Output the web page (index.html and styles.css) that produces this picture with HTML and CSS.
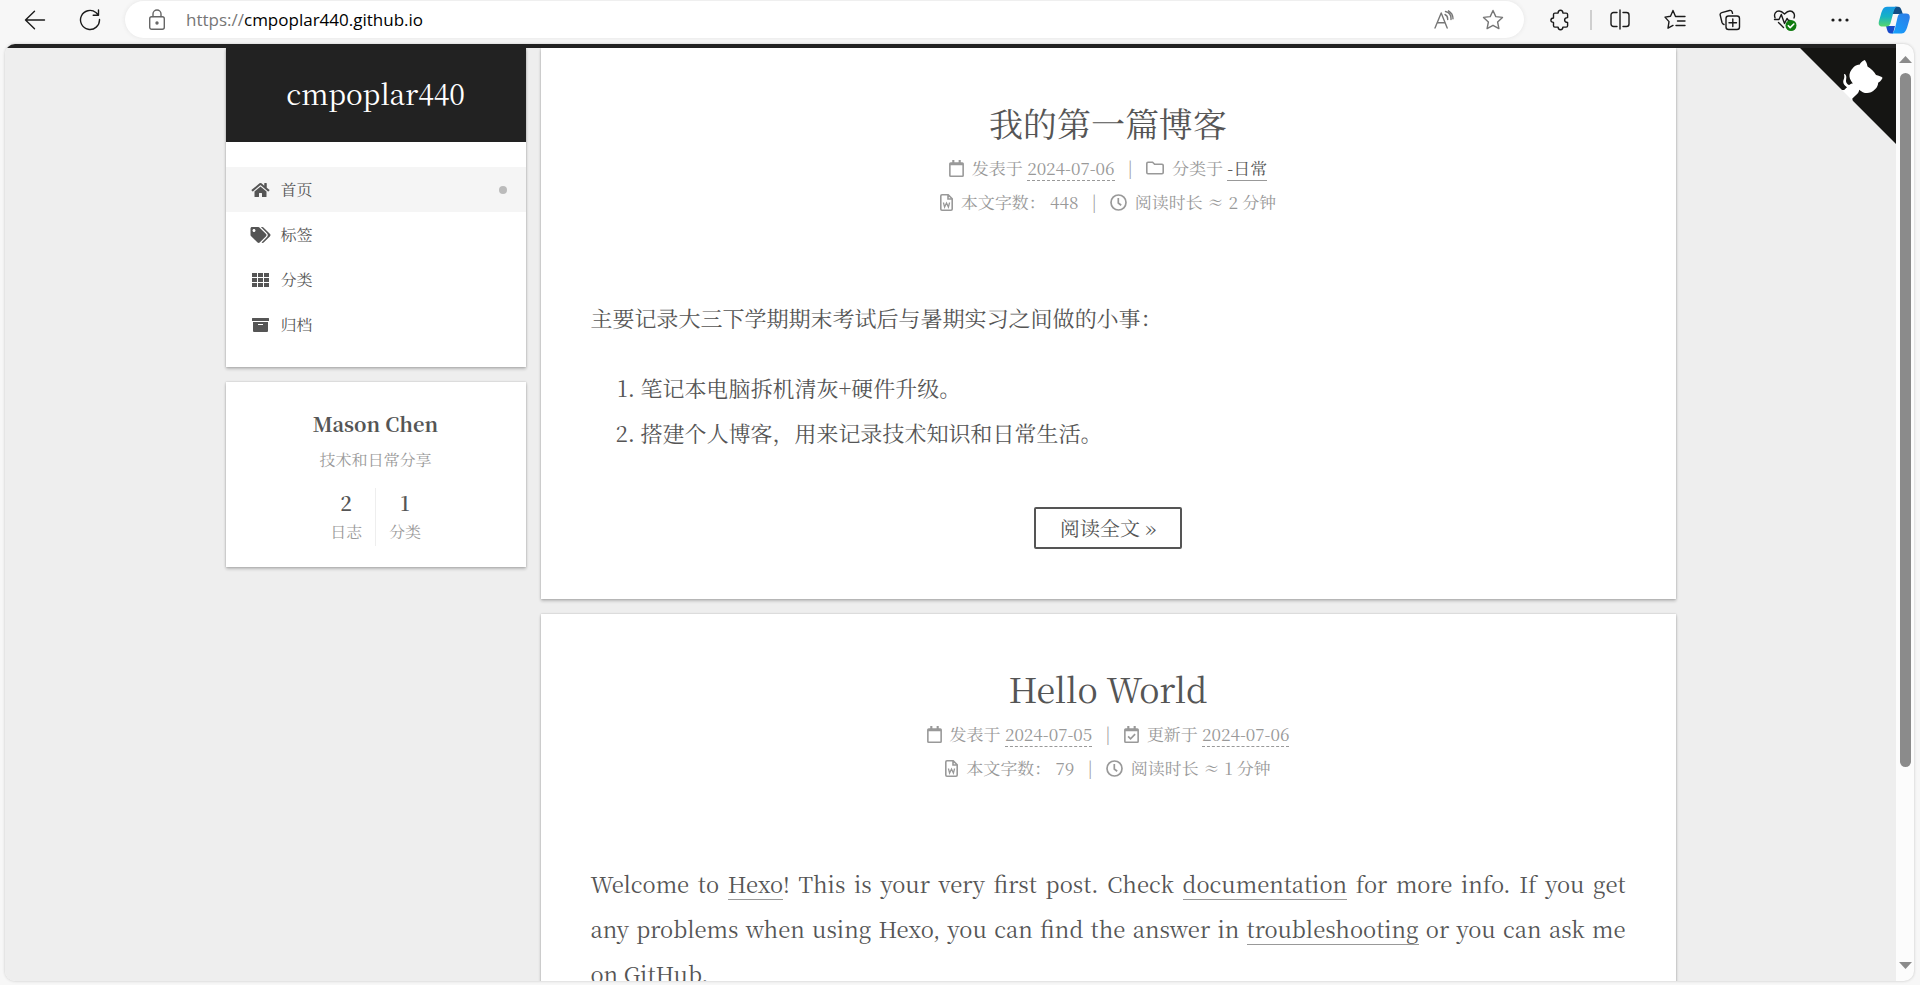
FILE: index.html
```html
<!DOCTYPE html>
<html lang="zh-CN">
<head>
<meta charset="utf-8">
<title>cmpoplar440</title>
<link rel="stylesheet" href="styles.css">
</head>
<body>
<svg class="sprite" aria-hidden="true">
  <symbol id="i-calendar" viewBox="0 0 14 16"><path fill-rule="evenodd" d="M3 0h2v2h4V0h2v2h1.500a1.500 1.500 0 0 1 1.500 1.500v11a1.500 1.500 0 0 1-1.500 1.500h-11A1.500 1.500 0 0 1 0 14.500v-11A1.500 1.500 0 0 1 1.500 2H3zM1.500 5v9.300c0 .1.100.2.200.2h10.600c.1 0 .2-.1.200-.2V5z"/></symbol>
  <symbol id="i-check" viewBox="0 0 14 16"><use href="#i-calendar"/><path d="M3.800 9.700l2.300 2.300 4.300-4.400" fill="none" stroke="currentColor" stroke-width="1.600"/></symbol>
  <symbol id="i-folder" viewBox="0 0 18 16"><path d="M.8 3.500c0-.7.500-1.200 1.200-1.200h4.600l2 2H16c.7 0 1.200.5 1.200 1.200v7c0 .7-.5 1.200-1.200 1.200H2c-.7 0-1.200-.5-1.200-1.200z" fill="none" stroke="currentColor" stroke-width="1.600"/></symbol>
  <symbol id="i-word" viewBox="0 0 13 17"><path d="M.8 2c0-.7.500-1.200 1.200-1.200h6.200l4 4V15c0 .7-.5 1.200-1.200 1.200H2c-.7 0-1.200-.5-1.200-1.200zM8 .8V5h4.200" fill="none" stroke="currentColor" stroke-width="1.600"/><path d="M3.400 8.500l1.200 4.500 1.900-4 1.900 4 1.200-4.500" fill="none" stroke="currentColor" stroke-width="1.300"/></symbol>
  <symbol id="i-clock" viewBox="0 0 17 17"><circle cx="8.500" cy="8.500" r="7.500" fill="none" stroke="currentColor" stroke-width="1.700"/><path d="M8.300 4v5l2.900 2.200" fill="none" stroke="currentColor" stroke-width="1.700"/></symbol>
</svg>

<header class="toolbar">
  <button class="tool" aria-label="后退"><svg width="22" height="20" viewBox="0 0 22 20" class="line"><path d="M20.500 10H1.500M10.500 1.200L1.500 10l9 8.800"/></svg></button>
  <button class="tool" aria-label="刷新"><svg width="22" height="22" viewBox="0 0 22 22" class="line"><path d="M20.500 10.500a9.500 9.500 0 1 1-3.600-7l2.600 2.500M19.500 1v5.200h-5.300"/></svg></button>
  <div class="address">
    <svg class="line lock" width="18" height="22" viewBox="0 0 18 22"><rect x="1.700" y="7.700" width="14.600" height="12.600" rx="2"/><path d="M5 7.500V5a4 4 0 0 1 8 0v2.500"/><circle cx="9" cy="14" r="1" fill="currentColor"/></svg>
    <span class="url"><span class="scheme">https://</span>cmpoplar440.github.io</span>
    <button class="tool small" aria-label="大声朗读"><svg class="line" width="20" height="20" viewBox="0 0 20 20"><path d="M1 18L7.200 3l6 15M3.200 12.800h8M11 4.500c2 1 2.800 2.700 2.700 5M11.500 1.500c4 1 5.800 4 5.500 8M14.500.8c2.500 1.500 4.500 4 4.500 8"/></svg></button>
    <button class="tool small" aria-label="收藏此页"><svg class="line" width="22" height="22" viewBox="0 0 22 22"><path d="M11 1.500l2.800 6.100 6.700.8-4.900 4.600 1.300 6.600L11 16.300l-5.900 3.300L6.400 13 1.500 8.400l6.700-.8z"/></svg></button>
  </div>
  <button class="tool" aria-label="扩展"><svg class="line" width="20" height="22" viewBox="0 0 20 22"><path d="M3.500 9V5.500c0-.9.500-1.400 1.400-1.400h3.200C8.100 2.200 9.200 1.200 10.500 1.200s2.400 1 2.400 2.900h3.300c.9 0 1.400.5 1.400 1.400V8.600c-1.900 0-3 1-3 2.400s1.100 2.400 3 2.400v3.300c0 .9-.5 1.400-1.400 1.400h-3.300c0 1.800-1.100 2.700-2.400 2.700s-2.400-.9-2.400-2.700H4.900c-.9 0-1.400-.5-1.400-1.400v-3.300C1.800 13.400.9 12.400.9 11.200S1.800 9 3.500 9z"/></svg></button>
  <span class="divider"></span>
  <button class="tool" aria-label="分屏"><svg class="line" width="20" height="22" viewBox="0 0 20 22"><path d="M7 3.500H3.500A2.500 2.500 0 0 0 1 6v9a2.500 2.500 0 0 0 2.500 2.500H7M13 3.500h3.500A2.500 2.500 0 0 1 19 6v9a2.500 2.500 0 0 1-2.500 2.500H13M10 1v19"/></svg></button>
  <button class="tool" aria-label="收藏夹"><svg class="line" width="22" height="22" viewBox="0 0 22 22"><path d="M13.500 7.500h-2L9 1.500 6.500 7.300l-5.500.8 4 4.500-1 6.600 5-2.800M12 7.500h9M13.500 12H21M12 16.500h9"/></svg></button>
  <button class="tool" aria-label="集锦"><svg class="line" width="22" height="22" viewBox="0 0 22 22"><rect x="7" y="7" width="13.500" height="13.500" rx="2.500"/><path d="M13.800 10v7.500M10 13.700h7.500M5 15.500c-1-.3-1.700-1-2-2L1.200 6.200c-.3-1.300.4-2.300 1.600-2.600L10.500 1.500c1.300-.3 2.300.3 2.700 1.500l.3 1.300"/></svg></button>
  <button class="tool" aria-label="浏览器概要"><svg class="line" width="24" height="24" viewBox="0 0 24 24"><path d="M2 9.800C.5 5.500 3 3 6 3c2 0 3.500 1 5.500 3C13.500 4 15 3 17 3c3 0 5.500 3 4 7M1.500 11.500H6l2.300-5 3.200 9 2.500-5 1.500 2H17M5.500 14.500l5 5"/><circle cx="18" cy="17.500" r="5.500" fill="#107c10" stroke="none"/><path d="M15.300 17.700l1.900 1.900 3.600-3.600" stroke="#fff" stroke-width="1.600"/></svg></button>
  <button class="tool" aria-label="更多"><svg width="18" height="4" viewBox="0 0 18 4"><circle cx="2" cy="2" r="1.600"/><circle cx="9" cy="2" r="1.600"/><circle cx="16" cy="2" r="1.600"/></svg></button>
  <button class="tool copilot" aria-label="Copilot"><svg width="32" height="28" viewBox="0 0 32 28">
    <defs>
      <linearGradient id="ga" x1="0" y1="0" x2="0" y2="1"><stop offset="0" stop-color="#1598e6"/><stop offset=".5" stop-color="#16b3c4"/><stop offset="1" stop-color="#57d66c"/></linearGradient>
      <linearGradient id="gb" x1="0" y1="1" x2="1" y2="0"><stop offset="0" stop-color="#12a5ff"/><stop offset="1" stop-color="#2f7be6"/></linearGradient>
    </defs>
    <path d="M20 .8c2 0 3 1.500 3.800 4.200l1 3H14l3-7.200z" fill="#104d85"/>
    <path d="M8 20h9l-2 7.500h-2c-2.500 0-3.300-1.500-4-4z" fill="#1749c9"/>
    <path d="M20 .8H9C5.500.8 4.200 4 3 8L1 15c-1 4 .5 5.500 3.500 5.500h4c2.500 0 3.500-1.500 4.200-4L15.500 6C16.500 2.500 17.500.8 20 .8z" fill="url(#ga)"/>
    <path d="M12.500 27.500h11c3.500 0 4.800-3.200 6-7.200l2-7c1-4-.5-5.800-3.500-5.800h-4.500c-2.500 0-3.300 1.500-4 4L17 22.300c-1 3.500-2 5.200-4.500 5.200z" fill="url(#gb)"/>
  </svg></button>
</header>

<div class="frame">
  <div class="page">
    <div class="container">
      <aside class="sidebar">
        <div class="card">
          <a class="brand" href="#">cmpoplar440</a>
          <nav class="menu">
            <a class="menu-item active" href="#"><svg class="menu-icon" width="18" height="16" viewBox="0 0 576 512"><path d="M280.370 148.260L96 300.110V464a16 16 0 0 0 16 16l112.060-.29a16 16 0 0 0 15.920-16V368a16 16 0 0 1 16-16h64a16 16 0 0 1 16 16v95.640a16 16 0 0 0 16 16.050L464 480a16 16 0 0 0 16-16V300L295.670 148.260a12.190 12.190 0 0 0-15.300 0zM571.600 251.470L488 182.560V44.050a12 12 0 0 0-12-12h-56a12 12 0 0 0-12 12v72.610L318.470 43a48 48 0 0 0-61 0L4.340 251.470a12 12 0 0 0-1.600 16.900l25.500 31A12 12 0 0 0 45.150 301l235.220-193.740a12.190 12.190 0 0 1 15.300 0L530.900 301a12 12 0 0 0 16.900-1.600l25.500-31a12 12 0 0 0-1.700-16.930z"/></svg>首页<span class="dot"></span></a>
            <a class="menu-item" href="#"><svg class="menu-icon" width="20" height="16" viewBox="0 0 640 512"><path d="M497.941 225.941L286.059 14.059A48 48 0 0 0 252.118 0H48C21.490 0 0 21.490 0 48v204.118a48 48 0 0 0 14.059 33.941l211.882 211.882c18.744 18.745 49.136 18.746 67.882 0l204.118-204.118c18.745-18.745 18.745-49.137 0-67.882zM112 160c-26.510 0-48-21.490-48-48s21.490-48 48-48 48 21.490 48 48-21.490 48-48 48zm513.941 133.823L421.823 497.941c-18.745 18.745-49.137 18.745-67.882 0l-.36-.36L527.640 323.522c16.999-16.999 26.360-39.600 26.360-63.640s-9.362-46.641-26.360-63.640L331.397 0h48.721a48 48 0 0 1 33.941 14.059l211.882 211.882c18.745 18.745 18.745 49.137 0 67.882z"/></svg>标签</a>
            <a class="menu-item" href="#"><svg class="menu-icon" width="17" height="14" viewBox="0 0 17 14"><path d="M0 0h5v4H0zM6 0h5v4H6zM12 0h5v4h-5zM0 5h5v4H0zM6 5h5v4H6zM12 5h5v4h-5zM0 10h5v4H0zM6 10h5v4H6zM12 10h5v4h-5z"/></svg>分类</a>
            <a class="menu-item" href="#"><svg class="menu-icon" width="17" height="14" viewBox="0 0 17 14"><path d="M.5 0h16a.5.5 0 0 1 .5.500V3H0V.500A.5.500 0 0 1 .5 0zM1 4h15v9a1 1 0 0 1-1 1H2a1 1 0 0 1-1-1zM6 6v1h5V6z" fill-rule="evenodd"/></svg>归档</a>
          </nav>
        </div>
        <div class="card profile">
          <p class="author">Mason Chen</p>
          <p class="bio">技术和日常分享</p>
          <div class="stats">
            <a class="stat" href="#"><span class="count">2</span>日志</a>
            <a class="stat" href="#"><span class="count">1</span>分类</a>
          </div>
        </div>
      </aside>
      <main class="posts">
        <article class="post">
          <h2 class="post-title">我的第一篇博客</h2>
          <div class="meta">
            <svg class="icon" width="15" height="17"><use href="#i-calendar"/></svg><span>发表于 <time>2024-07-06</time></span><span class="bar">|</span><svg class="icon" width="18" height="16"><use href="#i-folder"/></svg><span>分类于 <a class="link category" href="#">-日常</a></span>
          </div>
          <div class="meta">
            <svg class="icon" width="13" height="17"><use href="#i-word"/></svg><span>本文字数： 448</span><span class="bar">|</span><svg class="icon" width="17" height="17"><use href="#i-clock"/></svg><span>阅读时长 ≈ 2 分钟</span>
          </div>
          <div class="body">
            <p>主要记录大三下学期期末考试后与暑期实习之间做的小事：</p>
            <ol>
              <li>笔记本电脑拆机清灰+硬件升级。</li>
              <li>搭建个人博客，用来记录技术知识和日常生活。</li>
            </ol>
          </div>
          <a class="more" href="#">阅读全文 »</a>
        </article>
        <article class="post">
          <h2 class="post-title">Hello World</h2>
          <div class="meta">
            <svg class="icon" width="15" height="17"><use href="#i-calendar"/></svg><span>发表于 <time>2024-07-05</time></span><span class="bar">|</span><svg class="icon" width="15" height="17"><use href="#i-check"/></svg><span>更新于 <time>2024-07-06</time></span>
          </div>
          <div class="meta">
            <svg class="icon" width="13" height="17"><use href="#i-word"/></svg><span>本文字数： 79</span><span class="bar">|</span><svg class="icon" width="17" height="17"><use href="#i-clock"/></svg><span>阅读时长 ≈ 1 分钟</span>
          </div>
          <div class="body">
            <p>Welcome to <a class="link" href="#">Hexo</a>! This is your very first post. Check <a class="link" href="#">documentation</a> for more info. If you get any&nbsp;problems when using Hexo, you can find the answer in <a class="link" href="#">troubleshooting</a> or you can ask me on&nbsp;<a class="link" href="#">GitHub</a>.</p>
          </div>
        </article>
      </main>
    </div>
    <a class="corner" href="#" aria-label="GitHub"><svg width="100" height="100" viewBox="0 0 250 250"><path d="M0 0l115 115h15l12 27 108 108V0z" fill="#151513"/><path fill="#fff" d="M128.300 109C113.800 99.700 119 89.600 119 89.600c3-6.900 1.500-11 1.500-11-1.300-6.600 2.900-2.300 2.900-2.300 3.900 4.600 2.100 11 2.100 11-2.600 10.300 5.100 14.600 8.900 15.900z"/><path fill="#fff" d="M115 115c-.1.1 3.700 1.500 4.800.4l13.900-13.800c3.200-2.400 6.200-3.200 8.500-3C133.800 88 127.500 74.400 143.800 58c4.700-4.600 10.200-6.800 15.900-7 .6-1.600 3.500-7.400 11.700-10.900 0 0 4.700 2.400 7.400 16.100 4.300 2.400 8.400 5.600 12.100 9.200 3.600 3.600 6.800 7.800 9.200 12.200 13.700 2.600 16.200 7.300 16.200 7.300-3.600 8.200-9.400 11.100-10.900 11.700-.3 5.800-2.400 11.200-7.100 15.900-16.400 16.400-30 10-40.600 1.600.2 2.800-1 6.800-5 10.800L141 136.500c-1.200 1.200.6 5.400.8 5.300z"/></svg></a>
  </div>
  <div class="scrollbar">
    <svg width="13" height="8" viewBox="0 0 13 8"><path d="M6.500 0L13 7H0z"/></svg>
    <div class="track"><div class="thumb"></div></div>
    <svg width="13" height="8" viewBox="0 0 13 8"><path d="M6.500 8L13 1H0z"/></svg>
  </div>
</div>
</body>
</html>
```
FILE: styles.css
```css
* { box-sizing: border-box; }

body {
  margin: 0;
  height: 100vh;
  display: flex;
  flex-direction: column;
  overflow: hidden;
  background: #f7f7f7;
  color: #555;
  font: 400 16px/28px "Noto Serif SC", "Noto Serif CJK SC", "Liberation Serif", "Noto Sans CJK SC", serif;
}

a { color: inherit; text-decoration: none; }
p, h2, ol { margin: 0; }
svg { flex: none; fill: currentColor; }
.sprite { position: absolute; width: 0; height: 0; }
.line { fill: none; stroke: currentColor; stroke-width: 1.4; stroke-linejoin: round; stroke-linecap: round; }

/* Browser toolbar */
.toolbar {
  display: flex;
  align-items: center;
  height: 44px;
  padding: 1px 0 6px 7px;
  color: #1b1b1b;
}
.tool {
  display: flex;
  align-items: center;
  justify-content: center;
  flex: none;
  width: 55px;
  height: 36px;
  padding: 0;
  border: 0;
  background: none;
  color: inherit;
}
.tool.small { width: 49px; color: #767676; }
.tool.copilot { width: 53px; }
.address {
  display: flex;
  flex: 1;
  align-items: center;
  height: 37px;
  margin: 0 8px;
  padding: 0 7px 0 23px;
  border-radius: 19px;
  background: #fff;
  box-shadow: 0 0 4px #e4e4e4;
}
.lock { color: #666; }
.url {
  flex: 1;
  margin-left: 20px;
  font: 400 17px/24px "Open Sans", sans-serif;
  color: #000;
}
.scheme { color: #767676; }
.divider { width: 2px; height: 20px; margin-left: 3px; background: #cfcfcf; }

/* Viewport */
.frame {
  display: flex;
  flex: 1;
  min-height: 0;
  margin: 0 6px 4px 5px;
  border-radius: 10px;
  overflow: hidden;
  background: #fcfcfc;
  box-shadow: 0 0 3px #c4c4c4;
}
.page {
  position: relative;
  flex: 1;
  overflow: hidden;
  border-top: 4px solid #222;
  background: #eee;
}
.container {
  display: flex;
  align-items: flex-start;
  gap: 15px;
  max-width: 1450px;
  margin: 0 auto;
}
.corner { position: absolute; top: -4px; right: 0; line-height: 0; }

.scrollbar {
  display: flex;
  flex-direction: column;
  align-items: center;
  width: 18px;
  padding: 12px 0;
  color: #8b8b8b;
}
.track { flex: 1; width: 11px; margin: 9px 0; }
.thumb { height: 79%; border-radius: 6px; background: #8b8b8b; }

/* Sidebar */
.sidebar { flex: none; width: 300px; }
.card, .post { background: #fff; box-shadow: 0 2px 3px rgba(0, 0, 0, .22), 0 0 2px rgba(0, 0, 0, .2); }
.card + .card, .post + .post { margin-top: 15px; }
.brand {
  display: block;
  padding: 20px 0 24px;
  background: #222;
  color: #fff;
  font-size: 28px;
  line-height: 50px;
  text-align: center;
}
.menu { padding: 25px 0 20px; }
.menu-item { display: flex; align-items: center; height: 45px; padding: 0 19px 0 24px; }
.menu-icon { width: 21px; margin-right: 10px; }
.active { background: #f5f5f5; }
.dot { width: 8px; height: 8px; margin-left: auto; border-radius: 50%; background: #bbb; }

.profile { padding: 24px 20px 21px; text-align: center; }
.author { font-size: 20px; font-weight: 700; line-height: 36px; }
.bio { margin: 4px 0 14px; color: #999; }
.stats { display: flex; justify-content: center; }
.stat { display: flex; flex-direction: column; padding: 0 13px; color: #999; line-height: 28px; }
.stat + .stat { border-left: 1px solid #eee; }
.count { color: #555; font-size: 20px; font-weight: 600; line-height: 30px; }

/* Posts */
.posts { flex: 1; min-width: 0; }
.post { padding: 49px 50px 50px; }
.post-title { margin-bottom: 2px; font-size: 34px; font-weight: 400; line-height: 52px; text-align: center; }
.meta {
  display: flex;
  align-items: center;
  justify-content: center;
  height: 34px;
  color: #999;
  font-size: 17px;
}
.icon { margin-right: 8px; }
.bar { margin: 0 13px; }
time { border-bottom: 1px dashed #999; }
.link { border-bottom: 1px solid #999; }
.category { color: #555; }
.body { margin-top: 76px; font-size: 22px; line-height: 45px; text-align: justify; }
.body ol { margin-top: 25px; padding-left: 50px; }
.more {
  display: block;
  width: fit-content;
  margin: 52px auto 0;
  padding: 0 24px;
  border: 2px solid #555;
  border-radius: 2px;
  font-size: 20px;
  line-height: 38px;
}
```
